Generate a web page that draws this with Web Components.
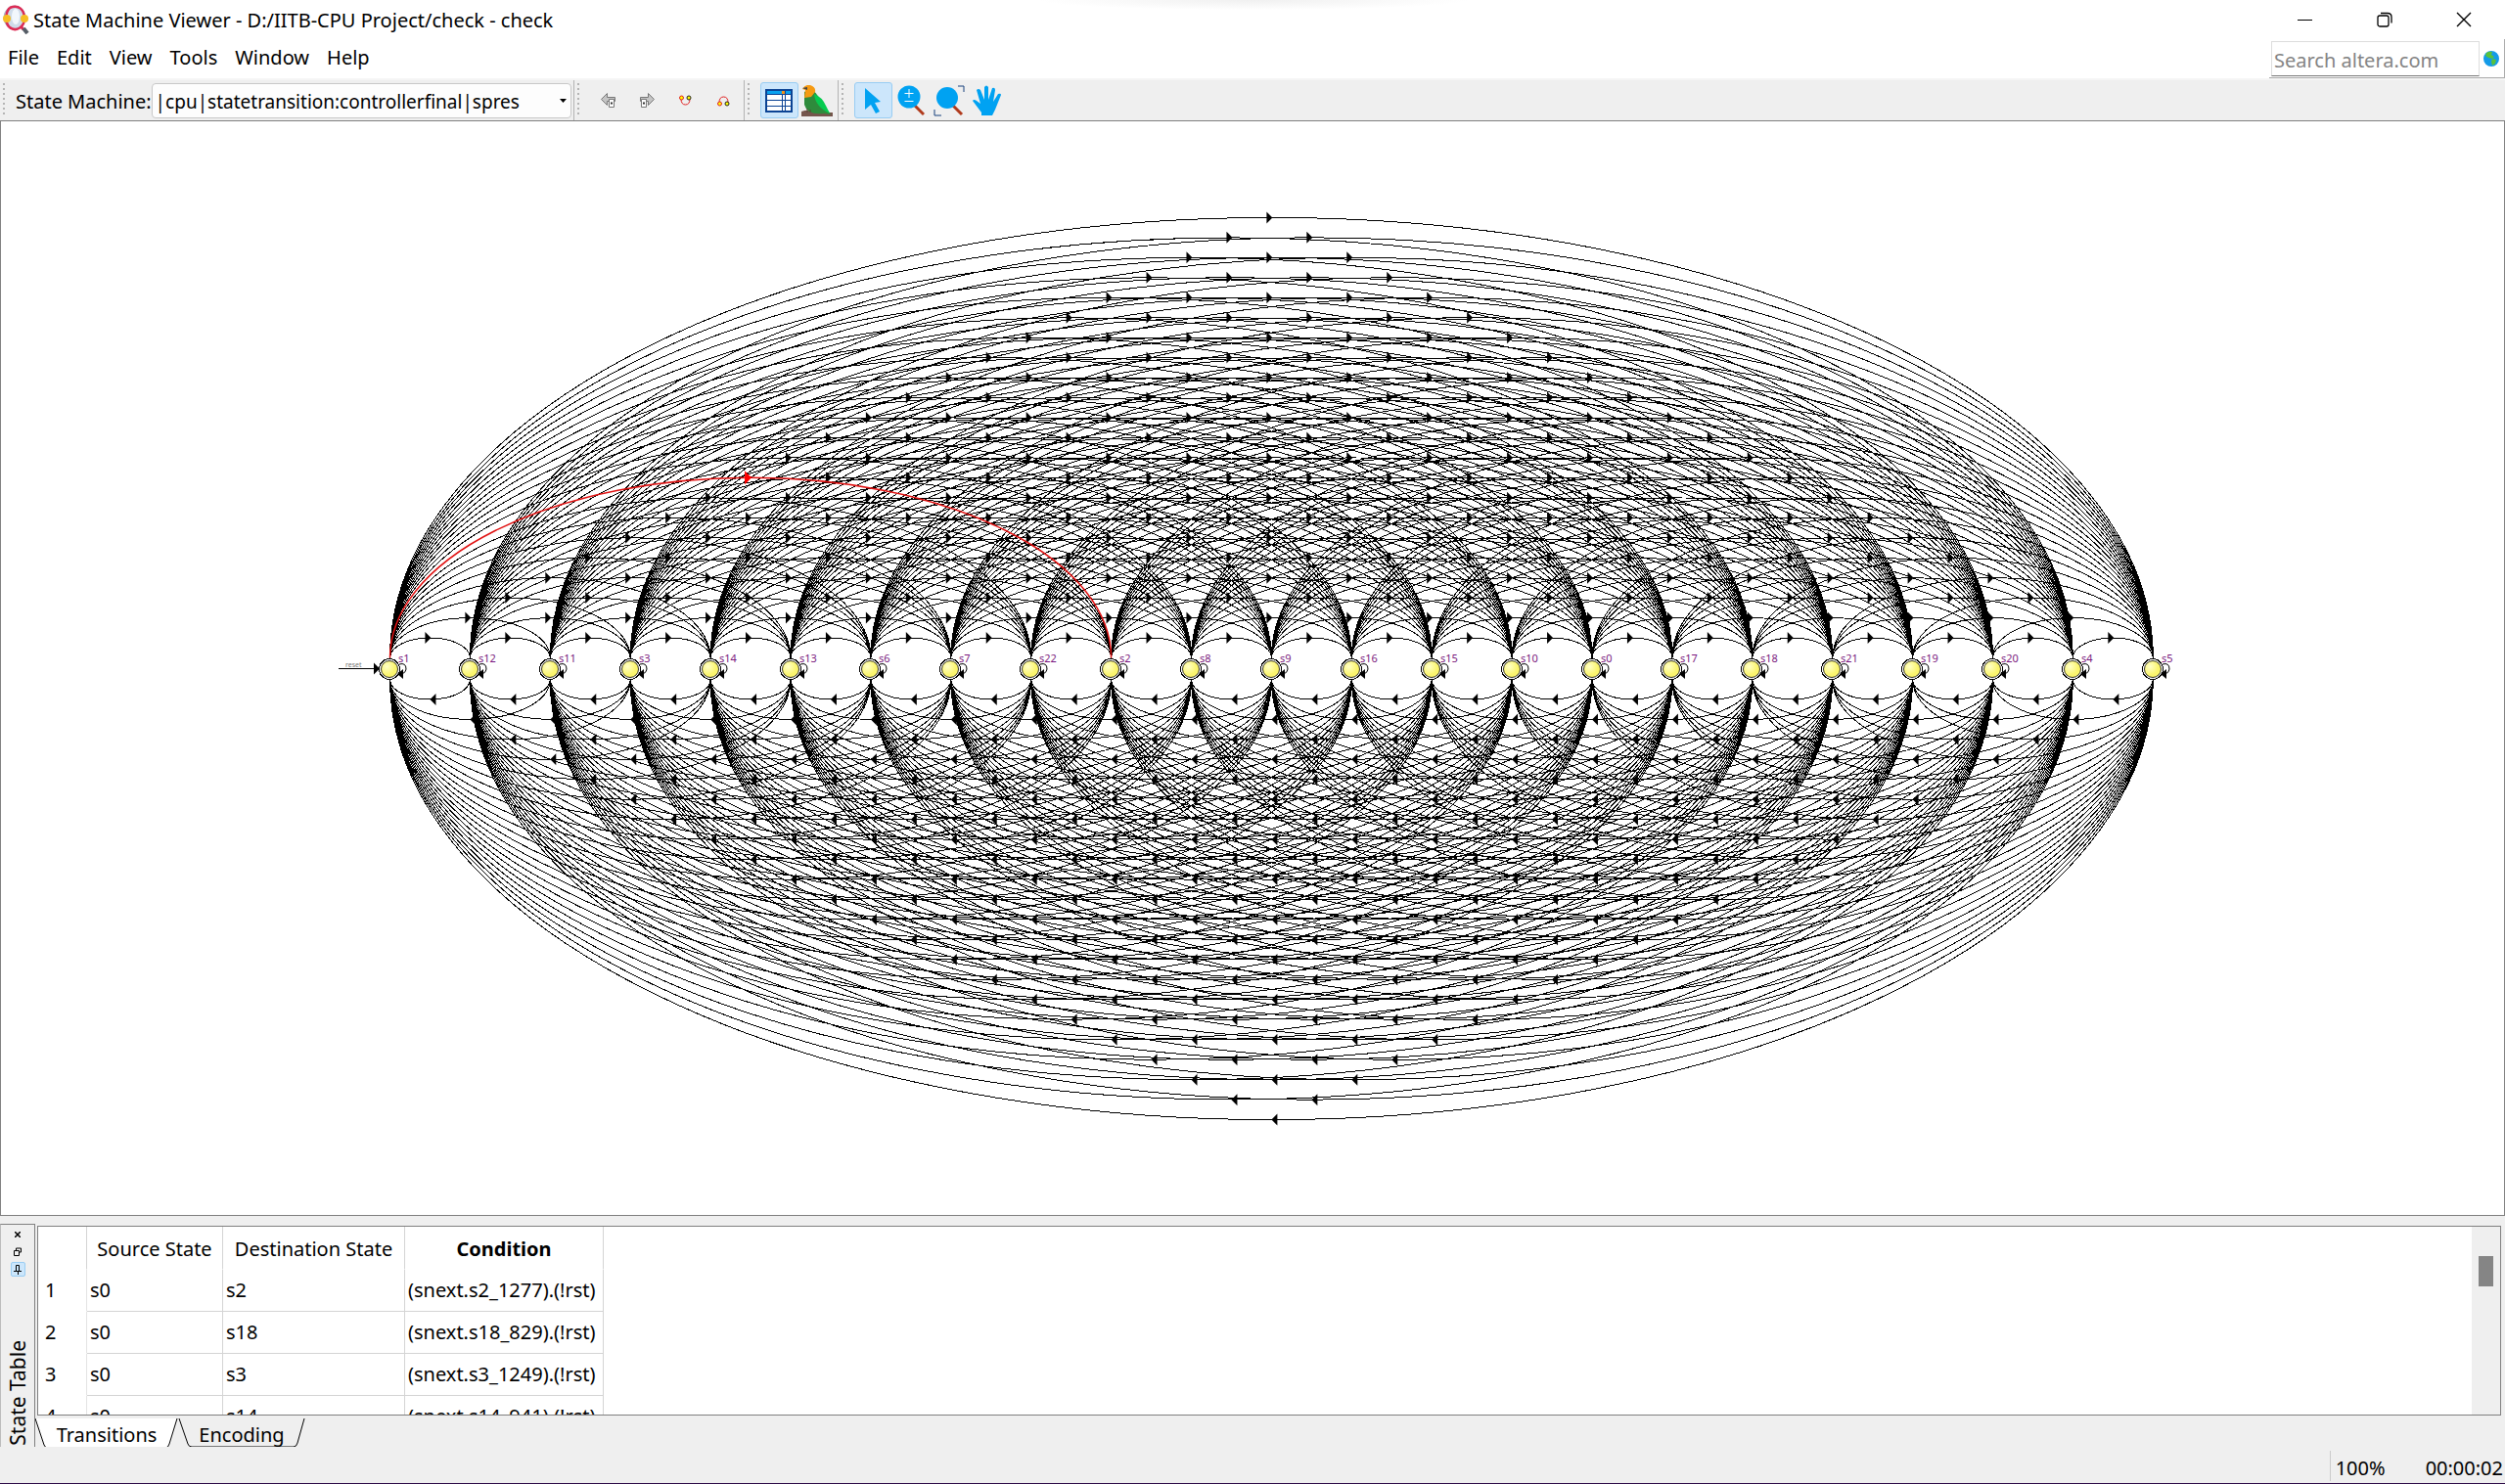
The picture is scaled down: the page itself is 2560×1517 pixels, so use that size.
<!DOCTYPE html>
<html lang="en"><head><meta charset="utf-8"><title>State Machine Viewer</title>
<style>
html,body{height:100%;margin:0}
body{font:20px/28px "Noto Sans",sans-serif;color:#000;background:#fff;overflow:hidden}
</style></head><body>
<state-viewer></state-viewer>
<script>
class BaseElement extends HTMLElement{
  connectedCallback(){
    if(this.shadowRoot)return;
    this.attachShadow({mode:'open'}).innerHTML='<style>*{box-sizing:border-box}button,select,input{font:inherit;color:inherit;margin:0;padding:0;border:0;background:none}svg{display:block}</style>'+this.view();
    if(this.ready)this.ready();
  }
}
customElements.define('title-bar',class extends BaseElement{view(){return `
<style>
:host{display:flex;align-items:center;height:40px;padding-right:2px;background:radial-gradient(ellipse 220px 10px at 50% 0,#f0f0f0,#fff)}
h1{font:inherit;margin:2px 0 0 4px;flex:1;white-space:nowrap}
.logo{margin:0 0 0 2px}
button{width:81px;height:40px;display:grid;place-items:center}
</style>
<svg class="logo" width="28" height="30" viewBox="0 0 28 30"><ellipse cx="13" cy="13" rx="11" ry="12" fill="#cfdcea" stroke="#9fb0c4"/><ellipse cx="14" cy="12" rx="4" ry="8" fill="#f2f7fc"/><path d="M8 3C3 8 3 20 9 24M8 3C17 -1 23 5 23 14S14 28 8 23" fill="none" stroke="#dc2c55" stroke-width="2.500"/><path d="M19 22l3 3" stroke="#dc2c55" stroke-width="3"/><path d="M22 24l4 5" stroke="#565d66" stroke-width="4"/><circle cx="5" cy="14" r="4" fill="#f6bd24"/><circle cx="23" cy="14" r="4" fill="#f6bd24"/></svg>
<h1>State Machine Viewer - D:/IITB-CPU Project/check - check</h1>
<button aria-label="Minimize"><svg width="16" height="16"><path d="M0 8.500h15" stroke="#000"/></svg></button>
<button aria-label="Restore"><svg width="16" height="16" fill="none" stroke="#000" stroke-width="1.300"><rect x="1" y="4" width="11" height="11" rx="2"/><path d="M4 1.500h7q4 0 4 4v6"/></svg></button>
<button aria-label="Close"><svg width="16" height="16"><path d="M1 1l14 14M15 1L1 15" stroke="#000" stroke-width="1.400"/></svg></button>`}});

customElements.define('menu-bar',class extends BaseElement{view(){return `
<style>
:host{display:flex;justify-content:space-between;height:40px;background:#fff}
nav{display:flex;gap:18px;padding:4px 0 0 8px}
nav button{height:30px;line-height:30px}
form{display:flex;gap:4px;width:241px;border-bottom:1px solid #aaa;border-right:1px solid #aaa;padding:2px 5px 1px 2px;align-items:center}
input{flex:1;min-width:0;width:10px;height:36px;border:1px solid #ddd;border-bottom:1px solid #777;padding:3px 2px 0;outline:0}
input::placeholder{color:#848484;opacity:1}
</style>
<nav><button>File</button><button>Edit</button><button>View</button><button>Tools</button><button>Window</button><button>Help</button></nav>
<form><input aria-label="Search altera.com" placeholder="Search altera.com"><button type="button" aria-label="Search the web"><svg width="16" height="16" viewBox="0 0 16 16"><circle cx="8" cy="8" r="8" fill="#149be8"/><path d="M3 2q3-2 6-1l-1 3 3 2-2 2-4-1-3-2zM9 8l4 1-1 4-3 2-1-4z" fill="#57c23c"/></svg></button></form>`}});

customElements.define('tool-group',class extends BaseElement{view(){return `
<style>
:host{display:flex;align-items:center;height:41px;border-right:1px solid #b4b4b4;padding:0 1px 0 3px}
:host([last]){border:0}
i{width:2px;height:35px;margin-right:11px;background:repeating-linear-gradient(#b4b4b4 0 2px,transparent 2px 5px)}
</style><i></i><slot></slot>`}});
customElements.define('tool-button',class extends BaseElement{view(){return `
<style>
:host{display:block}
button{width:39px;height:37px;display:grid;place-items:center;border:1px solid transparent;border-radius:3px}
:host([on]) button{background:#cce6fb;border-color:#99cdf3}
</style><button aria-label="${this.getAttribute('label')}"><slot></slot></button>`}});

customElements.define('tool-bar',class extends BaseElement{view(){return `
<style>
:host{display:flex;height:44px;background:#efefef;border-top:2px solid #f5f5f5;border-bottom:1px solid #808080}
label{white-space:nowrap;margin-top:2px}
select{appearance:none;width:429px;height:36px;border:1px solid #c8c8c8;border-radius:4px;background:#fdfdfd;padding:2px 3px 0;margin:0 1px 0 0;font-size:19px}
.box{position:relative;display:flex}
.box svg{position:absolute;right:6px;top:16px}
</style>
<tool-group><label for="m">State Machine:</label><span class="box"><select id="m"><option>|cpu|statetransition:controllerfinal|spres</option></select><svg width="7" height="4"><path d="M0 0h7L3.500 4z"/></svg></span></tool-group>
<tool-group>
<tool-button label="Back"><svg width="16" height="16" fill="#c4c4c4" stroke="#777"><path d="M.5 6.500l6-6v4h8v4h-8v4z"/><path d="M8.500 6.500h5v8h-5z" fill="#fff"/><path d="M11 9.500v2" stroke="#333" stroke-width="2"/></svg></tool-button>
<tool-button label="Forward"><svg width="16" height="16" fill="#c4c4c4" stroke="#777"><path d="M15.500 6.500l-6-6v4h-8v4h8v4z"/><path d="M2.500 6.500h5v8h-5z" fill="#fff"/><path d="M5 9.500v2" stroke="#333" stroke-width="2"/></svg></tool-button>
<tool-button label="Fan out"><svg width="13" height="12"><path d="M2 4q0 6 4.500 6T11 4" fill="none" stroke="#e02020"/><circle cx="2.500" cy="3" r="2" fill="#ff0" stroke="#e02020"/><circle cx="10" cy="3" r="2" fill="#ff0" stroke="#222"/></svg></tool-button>
<tool-button label="Fan in"><svg width="13" height="12"><path d="M2 8q0-6 4.500-6T11 8" fill="none" stroke="#e02020"/><circle cx="2.500" cy="9" r="2" fill="#ff0" stroke="#e02020"/><circle cx="10" cy="9" r="2" fill="#ff0" stroke="#222"/></svg></tool-button></tool-group>
<tool-group>
<tool-button label="State table" on><svg width="28" height="24"><path d="M1 1h26v22H1z" fill="#fff"/><path d="M1 1h26v4H1z" fill="#0aa2ef"/><path d="M17 1h4v4h-4z" fill="#f39318"/><path d="M1 5.500h26M1 11.500h26M1 17.500h26M17.500 5v18M20.500 2v21" fill="none" stroke="#0b4394"/><path d="M1 1h26v22H1z" fill="none" stroke="#0b4394" stroke-width="2"/></svg></tool-button>
<tool-button label="Bird's eye view"><svg width="32" height="32" viewBox="0 0 32 32"><path d="M0 27q8-3 13 1l19 0v4H0z" fill="#75554c"/><path d="M3 7q9-4 13 3l6 9 8 11-7-1q-17 2-20-9z" fill="#2e8b3c"/><path d="M1 4q3-5 8-4 6 2 5 7l-4 5-7 1 1-8z" fill="#f69a12"/><path d="M1 3l5-1v3z" fill="#444"/><path d="M13 9q8 3 12 12l4 8Q14 22 13 9z" fill="#06cb50"/><path d="M6 24v4M9 25v3" stroke="#543"/></svg></tool-button></tool-group>
<tool-group last>
<tool-button label="Select" on><svg width="18" height="28"><path d="M1 1l16 14-6 1 5 9-4 2-5-9-6 5z" fill="#00a2f2"/></svg></tool-button>
<tool-button label="Zoom"><svg width="28" height="32"><path d="M18 21l9 9" stroke="#b03a1c" stroke-width="3"/><circle cx="12" cy="12" r="11.500" fill="#00a2f2"/><path d="M12 4v9M7.500 8.500h9M7.500 16.500h9" stroke="#fff"/></svg></tool-button>
<tool-button label="Fit to page"><svg width="32" height="32"><path d="M20 21l9 9" stroke="#b03a1c" stroke-width="3"/><circle cx="14" cy="13" r="11" fill="#00a2f2"/><path d="M25 1h6v6M1 25v6h7" stroke="#16407c" fill="none"/></svg></tool-button>
<tool-button label="Pan"><svg width="32" height="32"><path d="M10 31v-3L1 16q1-2 4 0l4 3-4-14q2-2 4 0l4 10V2q2-3 4 0v13l4-12q3-1 3 2l-2 12 5-8q3-1 3 1l-6 15-3 6z" fill="#00a2f2"/></svg></tool-button></tool-group>`}});

customElements.define('state-graph',class extends BaseElement{
view(){return `
<style>
:host{display:grid;background:#fff;border:1px solid #808080;border-top:0;min-height:0;overflow:hidden}
svg{width:100%;height:100%}
text{font:11px "Noto Sans",sans-serif;fill:#7b1a80}
.reset{font-size:7px;fill:#777}
</style><svg id="g" viewBox="1 124 2558 1118" preserveAspectRatio="xMidYMid meet" role="img" aria-label="State diagram"></svg>`}
ready(){
  const names=['s1','s12','s11','s3','s14','s13','s6','s7','s22','s2','s8','s9','s16','s15','s10','s0','s17','s18','s21','s19','s20','s4','s5'];
  const left=398.5,step=81.9,rise=20.46,up=672.5,down=694.5,X=i=>left+step*i;
  let arcs='',heads='',nodes='';
  const arc=(a,b,y,h)=>`M${X(a)} ${y}A${(X(b)-X(a))/2} ${Math.abs(h)} 0 0 ${h<0?1:0} ${X(b)} ${y}`;
  for(let a=0;a<23;a++)for(let b=a+1;b<23;b++){
    const k=b-a,m=(X(a)+X(b))/2,t=up-rise*k,d=down+rise*k;
    if(a!==0||b!==9){arcs+=arc(a,b,up,-rise*k);heads+=`M${m+1} ${t}l-6-6v12z`}
    arcs+=arc(a,b,down,rise*k);heads+=`M${m} ${d}l6-6v12z`;
  }
  const rm=(X(0)+X(9))/2,rt=up-rise*9;
  names.forEach((n,i)=>{const x=Math.round(X(i)-.5);nodes+=`<circle cx="${x}" cy="684" r="10.500" fill="#fff" stroke="#000" shape-rendering="crispEdges"/><circle cx="${x}" cy="684" r="8.500" fill="url(#y)" stroke="#000" stroke-width=".8"/><path d="M${x+10} 679q7-2 7 5 0 3-4 5" fill="none" stroke="#000"/><path d="M${x+8} 689l6-5v10z"/><text x="${x+9}" y="677">${n}</text>`});
  this.shadowRoot.getElementById('g').innerHTML=`<defs><radialGradient id="y" cx=".35" cy=".35"><stop offset="0" stop-color="#ffffc8"/><stop offset="1" stop-color="#fbf56e"/></radialGradient></defs>
  <path d="${arcs}" fill="none" stroke="#000" shape-rendering="crispEdges"/><path d="${heads}"/>
  <path d="${arc(0,9,up,-rise*9)}" fill="none" stroke="#e01010" stroke-width="1.500"/><path d="M${rm+1} ${rt}l-7-7v14z" fill="#f00"/>
  ${nodes}<path d="M346 683.500h38" stroke="#000"/><path d="M388 683.500l-6-6v12z"/><text class="reset" x="353" y="682">reset</text>`;
}});

customElements.define('state-table',class extends BaseElement{view(){
const rows=[['s0','s2','(snext.s2_1277).(!rst)'],['s0','s18','(snext.s18_829).(!rst)'],['s0','s3','(snext.s3_1249).(!rst)'],['s0','s14','(snext.s14_941).(!rst)']];
return `
<style>
:host{display:flex;gap:2px;padding:8px 4px 0 0;height:236px;background:#efefef}
aside{width:36px;height:230px;border:1px solid #808080;border-left-color:#bbb;display:flex;flex-direction:column;align-items:center;padding-top:2px;gap:3px}
aside button{width:15px;height:15px;display:grid;place-items:center}
aside .on{background:#cce6fb;border:1px solid #99cdf3;border-radius:2px}
h2{font:inherit;font-size:21px;margin:auto 0 2px;writing-mode:vertical-rl;transform:rotate(180deg);line-height:28px}
main{flex:1;min-width:0}
.pane{height:194px;margin-top:2px;border:1px solid #808080;background:#fff;display:flex;justify-content:space-between;overflow:hidden}
table{border-collapse:separate;border-spacing:0;table-layout:fixed;width:578px;height:max-content}
th,td{height:43px;padding:0 3px;border-right:1px solid #d4d4d4;border-bottom:1px solid #d4d4d4;text-align:left;font-weight:400;white-space:nowrap;overflow:hidden}
thead th{height:44px;border-bottom-color:transparent;text-align:center;padding-top:3px}
thead th:last-child{font-weight:700}
tbody th{padding-left:7px;border-bottom-color:transparent;border-right-color:#e4e4e4}
.scroll{width:29px;background:#efefef;padding:30px 7px}
.scroll b{display:block;width:15px;height:31px;background:#858585}
.tabs{display:flex;align-items:flex-start;margin:2px 0 0 -2px}
.tabs button{display:grid;place-items:center;height:31px;width:146px}
.tabs button+button{width:130px}
.tabs svg,.tabs span{grid-area:1/1}
.tabs span{padding-top:4px}
</style>
<aside><button aria-label="Close"><svg width="6" height="6"><path d="M0 0l6 6M6 0L0 6" stroke="#000" stroke-width="1.500"/></svg></button><button aria-label="Float"><svg width="8" height="9" fill="none" stroke="#000"><path d="M2.500 3V1h5v4h-2M.5 3.500h5v5h-5z"/></svg></button><button class="on" aria-label="Pin"><svg width="8" height="10" fill="none" stroke="#000"><path d="M2.500 6V.5h3V6M0 6.500h8M4.500 7v3"/></svg></button><h2>State Table</h2></aside>
<main><div class="pane"><table><colgroup><col style="width:50px"><col style="width:139px"><col style="width:186px"><col style="width:203px"></colgroup><thead><tr><th></th><th>Source State</th><th>Destination State</th><th>Condition</th></tr></thead><tbody>${rows.map((r,i)=>`<tr><th>${i+1}</th>${r.map(c=>`<td>${c}</td>`).join('')}</tr>`).join('')}</tbody></table><div class="scroll"><b></b></div></div>
<div class="tabs"><button><svg width="146" height="31"><path d="M0 0l9 27q1 3 4 3h120q3 0 4-4L145 0" fill="#fff" stroke="#000"/></svg><span>Transitions</span></button><button><svg width="130" height="31"><path d="M1 0l9 26q1 3 4 3h104q3 0 4-4L129 0" fill="#efefef" stroke="#000"/></svg><span>Encoding</span></button></div></main>`}});

customElements.define('status-bar',class extends BaseElement{view(){return `
<style>
:host{display:flex;justify-content:flex-end;height:38px;background:#efefef;border-bottom:1px solid #2a0845;line-height:36px;padding:4px 2px 0 0;box-sizing:border-box}
span{border-left:1px solid #ccc;padding-left:5px;height:31px;width:98px}
</style><span>100%</span><time>00:00:02</time>`}});

customElements.define('state-viewer',class extends BaseElement{view(){return `
<style>
:host{display:flex;flex-direction:column;height:100vh}
title-bar,menu-bar,tool-bar,state-table,status-bar{box-sizing:border-box;flex:none}
state-graph{flex:1}
</style><title-bar></title-bar><menu-bar></menu-bar><tool-bar></tool-bar><state-graph></state-graph><state-table></state-table><status-bar></status-bar>`}});
</script></body></html>
